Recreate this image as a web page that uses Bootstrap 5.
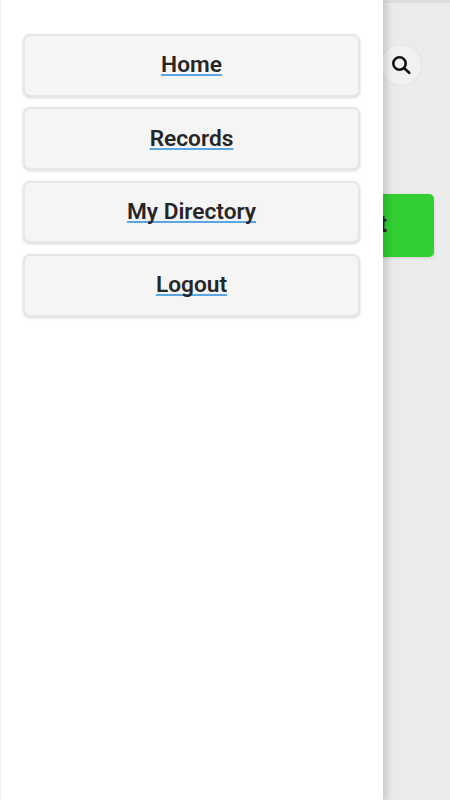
<!DOCTYPE html>
<html lang="en">
<head>
    <meta charset="UTF-8">
    <meta name="viewport" content="width=device-width, initial-scale=1.0">
    <title>Menu</title>
    <link href="https://cdn.jsdelivr.net/npm/bootstrap@5.3.0/dist/css/bootstrap.min.css" rel="stylesheet">
    <style>
        html, body {
            height: 100%;
        }

        body {
            background: #fff;
            font-family: Roboto, "Liberation Sans", sans-serif;
            overflow: hidden;
        }

        .page-under {
            height: 800px;
            background: #ebebeb;
            border-top: 3px solid #dedede;
            padding: 41px 16px 0 0;
        }

        .search-circle {
            width: 42px;
            height: 42px;
            margin-right: 12px;
            background: #f1f1f1;
            border: 1px solid #e2e2e2;
            border-radius: 50%;
        }

        .go-btn {
            width: 200px;
            height: 63px;
            margin-top: 108px;
            padding-right: 47px;
            background: #32cf32;
            border-radius: 5px;
            color: #222;
            font-size: 23px;
            font-weight: 700;
            box-shadow: 0 1px 3px rgba(0, 0, 0, 0.12);
        }

        .side-menu {
            position: absolute;
            top: 0;
            left: 0;
            width: 383px;
            height: 800px;
            padding: 34px 23px 0 22px;
            background: #fff;
            border-left: 1px solid #f2f2f2;
            box-shadow: 5px 0 6px 0 rgba(0, 0, 0, 0.13);
        }

        .menu-list {
            gap: 10.7px;
        }

        .menu-btn {
            height: 62.7px;
            background: #f5f5f5;
            border: 2px solid #e6e6e6;
            border-radius: 7px;
            box-shadow: 0 1px 3px rgba(0, 0, 0, 0.16);
            color: #262626;
            font-size: 22.7px;
            font-weight: 600;
            text-decoration: underline;
            text-decoration-color: #5aa6e2;
            text-decoration-thickness: 1.5px;
            text-decoration-skip-ink: none;
            text-underline-offset: 2px;
        }
    </style>
</head>
<body>
    <div class="page-under d-flex flex-column align-items-end">
        <div class="search-circle d-flex align-items-center justify-content-center">
            <svg width="22" height="22" viewBox="0 0 22 22" fill="none" stroke="#111">
                <circle cx="9.5" cy="9.5" r="6.2" stroke-width="2.6"/>
                <path d="M14.2 14.2l5 4.6" stroke-width="2.6" stroke-linecap="round"/>
            </svg>
        </div>
        <div class="go-btn d-flex align-items-center justify-content-end">Submit</div>
    </div>

    <div class="side-menu">
        <div class="menu-list d-flex flex-column">
            <a href="#" class="menu-btn d-flex align-items-center justify-content-center">Home</a>
            <a href="#" class="menu-btn d-flex align-items-center justify-content-center">Records</a>
            <a href="#" class="menu-btn d-flex align-items-center justify-content-center">My Directory</a>
            <a href="#" class="menu-btn d-flex align-items-center justify-content-center">Logout</a>
        </div>
    </div>

    <script src="https://cdn.jsdelivr.net/npm/bootstrap@5.3.0/dist/js/bootstrap.bundle.min.js"></script>
</body>
</html>
